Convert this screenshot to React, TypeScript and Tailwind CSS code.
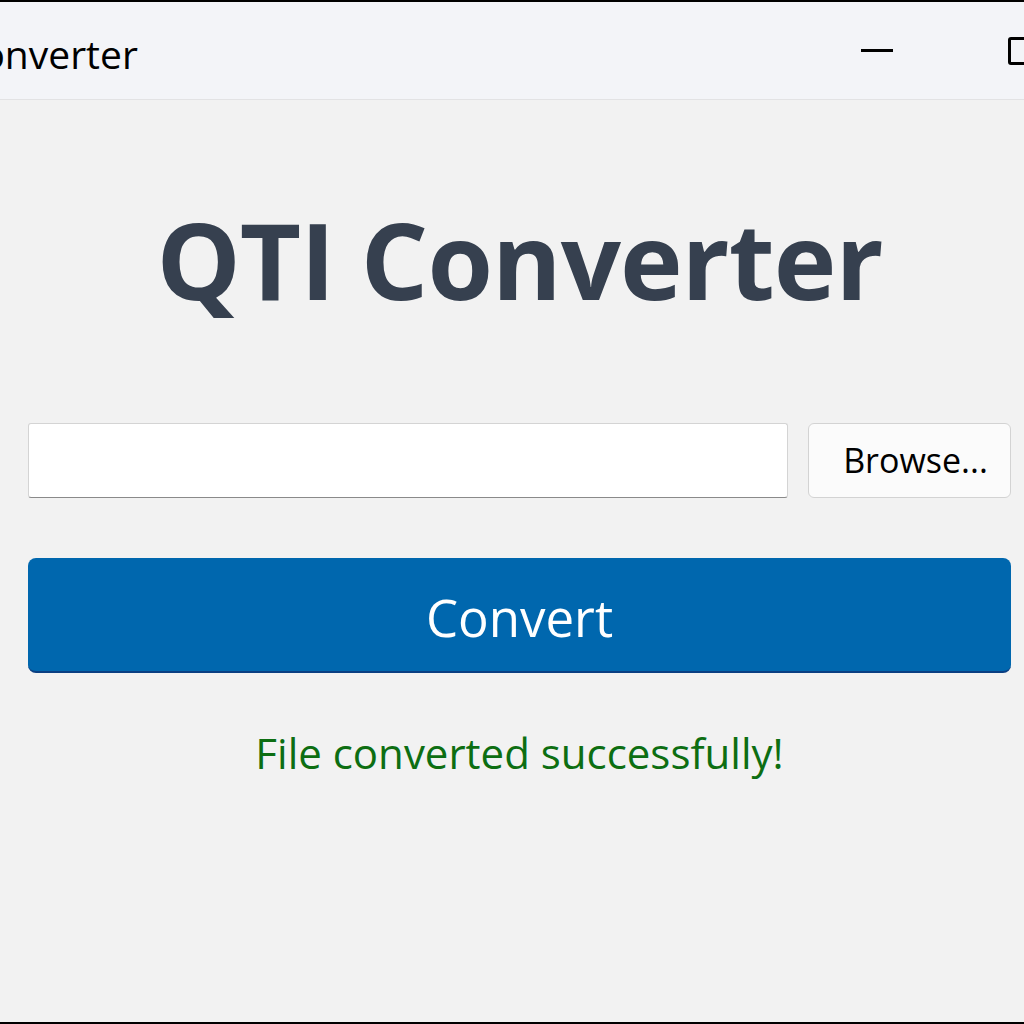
export default function App() {
  return (
    <div
      className="flex h-[1024px] w-[1024px] flex-col overflow-hidden border-y-2 border-black bg-[#f2f2f2]"
      style={{ fontFamily: '"Open Sans", "Noto Sans", sans-serif' }}
    >
      {/* ── Title bar ─────────────────────────── */}
      <div className="flex h-[98px] shrink-0 items-center overflow-hidden border-b border-[#e2e2e4] bg-[#f3f4f8]">
        <span className="ml-[-116px] mt-[6px] whitespace-nowrap text-[39px] leading-none text-black">QTI Converter</span>
        <div className="ml-auto flex items-center">
          <div className="h-[3px] w-[32px] bg-black" />
          <div className="ml-[115px] mr-[-20px] h-[28px] w-[36px] rounded-[3px] border-[3px] border-black" />
        </div>
      </div>

      {/* ── Body ─────────────────────────────── */}
      <div className="flex flex-col pl-[28px] pr-[13px]">
        <h1 className="mt-[106px] text-center text-[106px] font-bold leading-none tracking-[-1px] text-[#36404f]">
          QTI Converter
        </h1>

        <div className="mt-[111px] flex gap-[20px]">
          <div className="h-[75px] flex-1 rounded-[3px] border border-[#d4d4d4] border-b-[#8a8a8a] bg-white" />
          <button className="h-[75px] w-[203px] rounded-[6px] border border-[#d3d3d3] bg-[#fbfbfb] pl-[12px] text-[34px] text-black">
            Browse...
          </button>
        </div>

        <button className="mt-[60px] h-[115px] w-full rounded-[8px] border-b-2 border-[#0b3f82] bg-[#0067ae] pt-[6px] text-[51px] text-white">
          Convert
        </button>

        <p className="mt-[48px] text-center text-[42px] text-[#0d6e12]">File converted successfully!</p>
      </div>
    </div>
  );
}
